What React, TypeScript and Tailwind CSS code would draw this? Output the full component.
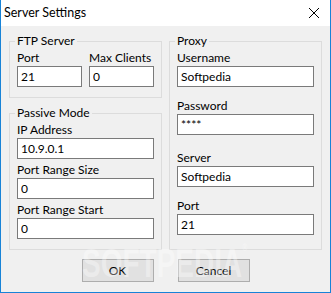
import type { ReactNode } from 'react';

function Group({ title, className, children }: { title: string; className?: string; children: ReactNode }) {
  return (
    <fieldset className={`border border-[#dcdcdc] px-[7px] ${className ?? ''}`}>
      <legend className="-ml-[2px] px-[2px] leading-[16px]">{title}</legend>
      {children}
    </fieldset>
  );
}

function Field({ label, value, className }: { label: string; value: string; className?: string }) {
  return (
    <div className={`flex flex-col ${className ?? ''}`}>
      <label className="leading-[17px] whitespace-nowrap">{label}</label>
      <input
        readOnly
        value={value}
        className="h-[21px] w-full border border-[#7a7a7a] bg-white px-[3px] leading-[19px] outline-none"
      />
    </div>
  );
}

export default function App() {
  return (
    <div className="relative flex h-[293px] w-[331px] flex-col border-x border-b border-[#1883d7] bg-[#f0f0f0] font-[Lato,sans-serif] text-[12px] text-black">
      {/* title bar */}
      <div className="flex h-[26px] shrink-0 items-center justify-between bg-white pl-[3px] pr-[11px]">
        <span className="text-[12.5px]">Server Settings</span>
        <svg width="10" height="10" viewBox="0 0 10 10" stroke="#000" strokeWidth="1" fill="none">
          <path d="M0 0 L10 10 M10 0 L0 10" />
        </svg>
      </div>

      <div className="flex gap-[7px] px-[8px] pt-[7px]">
        <div className="flex w-[153px] flex-col gap-[7px]">
          <Group title="FTP Server" className="pb-[10px]">
            <div className="flex gap-[7px]">
              <Field label="Port" value="21" className="w-[65px]" />
              <Field label="Max Clients" value="0" className="w-[65px]" />
            </div>
          </Group>
          <Group title="Passive Mode" className="pb-[10px]">
            <Field label="IP Address" value="10.9.0.1" />
            <Field label="Port Range Size" value="0" className="mt-[2px]" />
            <Field label="Port Range Start" value="0" className="mt-[2px]" />
          </Group>
        </div>
        <Group title="Proxy" className="w-[153px] pb-[14px]">
          <Field label="Username" value="Softpedia" />
          <Field label="Password" value="****" className="mt-[10px]" />
          <Field label="Server" value="Softpedia" className="mt-[14px]" />
          <Field label="Port" value="21" className="mt-[10px]" />
        </Group>
      </div>

      <div className="mt-[9px] flex justify-center gap-[24px]">
        <button className="h-[23px] w-[72px] border border-[#adadad] bg-[#e1e1e1]">OK</button>
        <button className="h-[23px] w-[72px] border border-[#adadad] bg-[#e1e1e1]">Cancel</button>
      </div>

      {/* watermark */}
      <div className="pointer-events-none absolute left-[81px] top-[243px] origin-left scale-x-[0.7] font-['Liberation_Sans',sans-serif] text-[40px] font-bold leading-none whitespace-nowrap text-white/35">
        SOFTPEDIA<span className="align-top text-[10px]">®</span>
      </div>
    </div>
  );
}
